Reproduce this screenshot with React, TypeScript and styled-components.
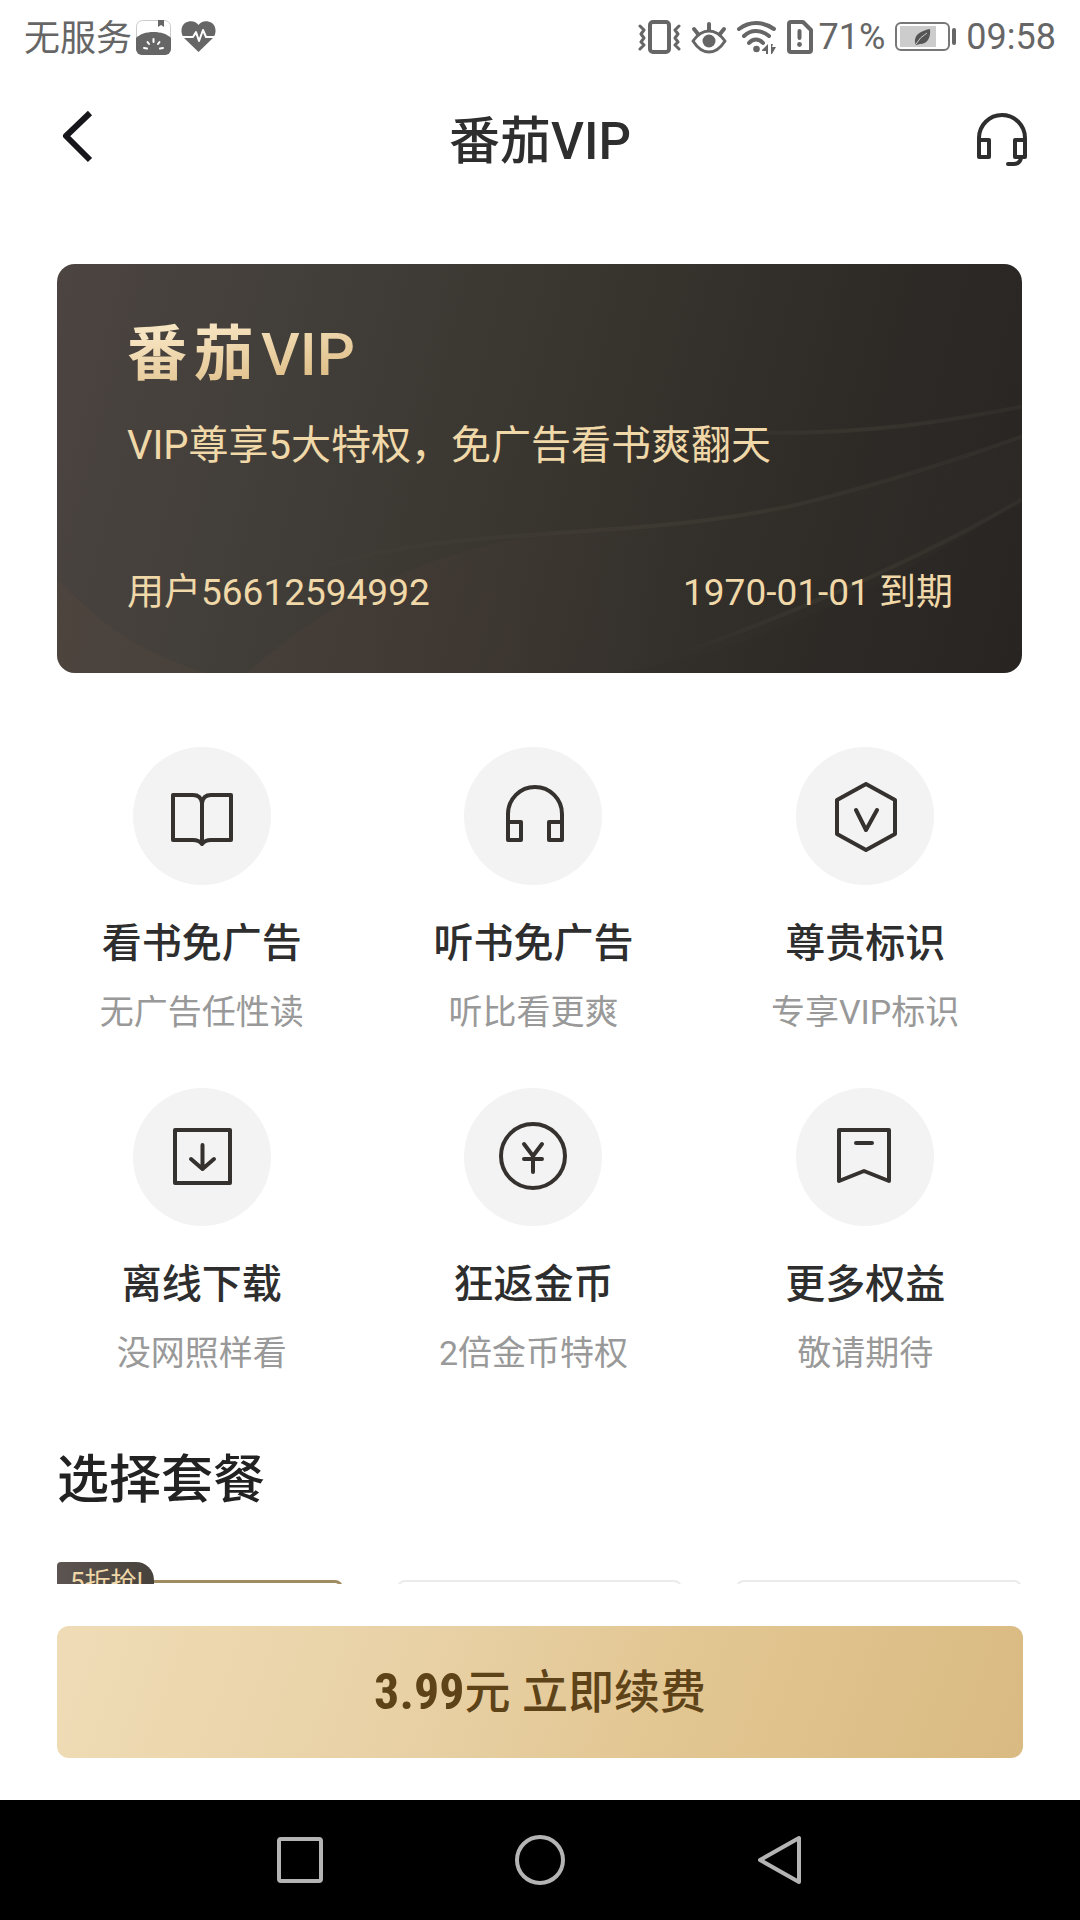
import React from "react";
import styled, { createGlobalStyle } from "styled-components";

const GlobalStyle = createGlobalStyle`
  *, *::before, *::after { box-sizing: border-box; }
  body {
    margin: 0;
    background: #fff;
    color: #2e2e2e;
    font-family: Roboto, "Noto Sans CJK SC", sans-serif;
  }
  h1, h2, h3, p { margin: 0; }
  button { border: 0; padding: 0; background: none; font: inherit; color: inherit; cursor: pointer; }
  svg { display: block; flex: none; }
`;

const Screen = styled.div`
  display: flex;
  flex-direction: column;
  height: 100vh;
  background: #fff;
`;

const StatusBar = styled.div`
  display: flex;
  justify-content: space-between;
  align-items: center;
  height: 74px;
  padding: 0 24px;
  color: #666;
  font-size: 36px;
  line-height: 48px;
`;

const StatusGroup = styled.div<{ $gap: number }>`
  display: flex;
  align-items: center;
  gap: ${(p) => p.$gap}px;
`;

const Carrier = styled.span`
  padding-top: 4px;
`;

const Header = styled.header`
  display: grid;
  grid-template-columns: 1fr auto 1fr;
  align-items: center;
  height: 132px;
  padding: 0 52px;
`;

const HeaderButton = styled.button<{ $end?: boolean }>`
  justify-self: ${(p) => (p.$end ? "end" : "start")};
`;

const PageTitle = styled.h1`
  padding-top: 4px;
  font-size: 51px;
  line-height: 72px;
  font-weight: 500;
`;

const Content = styled.main`
  flex: 1 1 0;
  min-height: 0;
  overflow-y: auto;
  scrollbar-width: none;
  padding-top: 58px;
`;

const VipCard = styled.section`
  position: relative;
  margin: 0 58px 0 57px;
  padding: 55px 69px 56px 70px;
  border-radius: 18px;
  overflow: hidden;
  color: #f0d8a8;
  background: linear-gradient(105deg, #4c4441 0%, #413e39 26%, #38352f 52%, #2e2b27 78%, #282422 100%);
`;

const CardWaves = styled.svg`
  position: absolute;
  inset: 0;
  width: 100%;
  height: 100%;
`;

const CardBody = styled.div`
  position: relative;
`;

const CardTitle = styled.h2`
  width: max-content;
  font-size: 60px;
  line-height: 72px;
  font-weight: 700;
  letter-spacing: 7px;
  color: transparent;
  background: linear-gradient(170deg, #f6e3c0 20%, #dcba80 90%);
  background-clip: text;
`;

const CardTitleMark = styled.span`
  font-weight: 500;
  letter-spacing: 0;
`;

const CardText = styled.p`
  margin-top: 27px;
  font-size: 40px;
  line-height: 56px;
`;

const CardFooter = styled.div`
  display: flex;
  justify-content: space-between;
  margin-top: 95px;
  font-size: 37px;
  line-height: 48px;
`;

const FeatureGrid = styled.ul`
  display: grid;
  grid-template-columns: repeat(3, 1fr);
  row-gap: 52px;
  margin: 74px 0 0;
  padding: 0 49px 0 36px;
  list-style: none;
`;

const Feature = styled.li`
  display: flex;
  flex-direction: column;
  align-items: center;
`;

const FeatureIcon = styled.div`
  display: flex;
  align-items: center;
  justify-content: center;
  width: 138px;
  height: 138px;
  border-radius: 50%;
  background: #f3f3f3;
  color: #35312e;
`;

const FeatureName = styled.h3`
  margin-top: 31px;
  font-size: 40px;
  line-height: 56px;
  font-weight: 500;
`;

const FeatureNote = styled.p`
  margin-top: 16px;
  font-size: 34px;
  line-height: 48px;
  color: #999;
`;

const SectionTitle = styled.h2`
  margin: 68px 57px 0;
  font-size: 52px;
  line-height: 72px;
  font-weight: 500;
  color: #222;
`;

const PlanList = styled.div`
  display: grid;
  grid-template-columns: repeat(3, 1fr);
  column-gap: 54px;
  margin: 63px 58px 0 57px;
  padding-bottom: 48px;
`;

const Plan = styled.div<{ $selected?: boolean }>`
  position: relative;
  min-height: 240px;
  border: ${(p) => (p.$selected ? "3px solid #a08c60" : "2px solid #ebebeb")};
  border-radius: 8px;
`;

const PlanBadge = styled.span`
  position: absolute;
  left: -3px;
  top: -21px;
  padding: 0 11px 0 13px;
  border-radius: 4px 18px 18px 0;
  background: linear-gradient(90deg, #5c5450, #47423c);
  color: #f0d8a8;
  font-size: 26px;
  line-height: 40px;
  white-space: nowrap;
`;

const ActionBar = styled.footer`
  padding: 42px 57px;
  background: #fff;
`;

const RenewButton = styled.button`
  display: flex;
  align-items: center;
  justify-content: center;
  width: 100%;
  height: 132px;
  border-radius: 12px;
  background: linear-gradient(110deg, #efdcb6 0%, #e8d0a4 40%, #e2c691 65%, #d9ba82 100%);
  color: #5e4318;
  font-size: 46px;
  line-height: 64px;
  font-weight: 500;
  white-space: pre;
`;

const Price = styled.span`
  font-family: "Roboto Condensed", Roboto, sans-serif;
  font-size: 50px;
  font-weight: 700;
`;

const NavBar = styled.nav`
  display: flex;
  align-items: center;
  justify-content: center;
  gap: 120px;
  height: 120px;
  background: #000;
  color: #b4b4b4;
`;

const NavButton = styled.button`
  display: flex;
  justify-content: center;
  width: 120px;
`;

const line = {
  fill: "none",
  stroke: "currentColor",
  strokeLinecap: "round" as const,
  strokeLinejoin: "round" as const,
};

const TomatoIcon = () => (
  <svg width="35" height="35" viewBox="0 0 35 35">
    <rect x="0.5" y="0.5" width="34" height="34" rx="6" fill="#fff" stroke="#ccc" />
    <path d="M0 18C4 14 10 12 17.500 12S31 14 35 18V29a6 6 0 0 1-6 6H6a6 6 0 0 1-6-6Z" fill="#666" />
    <path d="M22 0h6v7l-3-2-3 2Z" fill="#666" />
    <g stroke="#fff" strokeWidth="2" strokeLinecap="round">
      <path d="M17.500 19v3M11.500 22l1.500 2M23.500 22l-1.500 2M8 28l3 .5M27 28l-3 .5" />
    </g>
  </svg>
);

const HeartIcon = () => (
  <svg width="35" height="32" viewBox="0 0 35 32">
    <path d="M17.500 31L3 17C-1 12 0 5 4 2C9-1 15 0 17.500 4C20 0 26-1 31 2C35 5 36 12 32 17Z" fill="#666" />
    <path d="M0 16H12l3-5 3 9 4-11 3 7h10" fill="none" stroke="#fff" strokeWidth="2" strokeLinejoin="round" />
  </svg>
);

const VibrateIcon = () => (
  <svg width="43" height="34" viewBox="0 0 43 34" {...line} strokeWidth="3">
    <rect x="12" y="2" width="19" height="30" rx="3" strokeWidth="4" />
    <path d="M2 6l4 4-3 4 3 4-3 4 3 3-4 4M41 6l-4 4 3 4-3 4 3 4-3 3 4 4" />
  </svg>
);

const EyeIcon = () => (
  <svg width="36" height="34" viewBox="0 0 36 34" {...line} strokeWidth="4">
    <path d="M2 21Q9 11 18 11T34 21Q27 32 18 32T2 21Z" strokeWidth="3" />
    <circle cx="18" cy="21" r="6.500" fill="currentColor" stroke="none" />
    <path d="M18 4v6M3 9l4 5M33 9l-4 5" />
  </svg>
);

const WifiIcon = () => (
  <svg width="40" height="34" viewBox="0 0 40 34" {...line} strokeWidth="4">
    <path d="M2 9Q10 3 19 3T37 9M7 16Q12 11 19 11T32 16M12 23q3-3.500 7-3.500t7 3.500" />
    <circle cx="19.500" cy="29" r="3.300" fill="currentColor" stroke="none" />
    <path d="M31 24v10h-2v-3h-4v-1zM34 34V24h2l-1 3h4l-4 7z" fill="currentColor" stroke="none" />
  </svg>
);

const SimIcon = () => (
  <svg width="26" height="34" viewBox="0 0 26 34" {...line} strokeWidth="4">
    <path d="M4 2H16L24 10V30a2 2 0 0 1-2 2H4a2 2 0 0 1-2-2V4a2 2 0 0 1 2-2Z" />
    <path d="M12.500 11v7" />
    <circle cx="12.500" cy="24.500" r="2.400" fill="currentColor" stroke="none" />
  </svg>
);

const BatteryIcon = () => (
  <svg width="61" height="30" viewBox="0 0 61 30">
    <rect x="1" y="1" width="53" height="27" rx="5" fill="none" stroke="#777" strokeWidth="2" />
    <rect x="5" y="4" width="36" height="21" fill="#ccc" />
    <path d="M35 7c1 9-3 15-10 15l-4 1-1-2c-1-8 5-12 15-14Z" fill="#555" />
    <path d="M21 22Q25 15 32 11" fill="none" stroke="#ccc" />
    <rect x="57" y="6" width="4" height="17" rx="2" fill="#666" />
  </svg>
);

const BackIcon = () => (
  <svg width="52" height="60" viewBox="0 0 52 60" {...line} strokeWidth="6">
    <path d="M38 3L14 26L38 50" stroke="#17171b" strokeLinecap="butt" />
  </svg>
);

const SupportIcon = () => (
  <svg width="52" height="54" viewBox="0 0 52 54" {...line} strokeWidth="4">
    <path d="M3 27V25a23 23 0 0 1 46 0V27M3 27H13V44H3ZM39 27H49V44H39ZM45 45q-1 6-7 6h-6" />
  </svg>
);

const featureIcon = (content: React.ReactNode) => (
  <svg width="72" height="72" viewBox="0 0 72 72" {...line} strokeWidth="4">
    {content}
  </svg>
);

const FEATURES = [
  {
    name: "看书免广告",
    note: "无广告任性读",
    icon: featureIcon(
      <path d="M7 15H27q8 0 9 8q1-8 9-8H65V60H45q-6 0-9 4q-3-4-9-4H7ZM36 23V64" />
    ),
  },
  {
    name: "听书免广告",
    note: "听比看更爽",
    icon: featureIcon(
      <path d="M11 42V34a27 27 0 0 1 54 0V42M11 42H24V60H11ZM52 42H65V60H52Z" />
    ),
  },
  {
    name: "尊贵标识",
    note: "专享VIP标识",
    icon: featureIcon(<path d="M37 4L66 20V54L37 70L8 54V20ZM27 30L37 50L48 30" />),
  },
  {
    name: "离线下载",
    note: "没网照样看",
    icon: featureIcon(<path d="M9 9H64V62H9ZM36.500 24V48M25 38L36.500 48L48 38" />),
  },
  {
    name: "狂返金币",
    note: "2倍金币特权",
    icon: featureIcon(
      <>
        <circle cx="36" cy="35" r="32" />
        <path d="M27 23L36 35L45 23M36 35V51M27 38H45" />
      </>
    ),
  },
  {
    name: "更多权益",
    note: "敬请期待",
    icon: featureIcon(<path d="M10 9H60V60L35 50L10 60ZM27 22H43" />),
  },
];

export default function App() {
  return (
    <Screen>
      <GlobalStyle />
      <StatusBar>
        <StatusGroup $gap={10}>
          <StatusGroup $gap={4}>
            <Carrier>无服务</Carrier>
            <TomatoIcon />
          </StatusGroup>
          <HeartIcon />
        </StatusGroup>
        <StatusGroup $gap={6}>
          <StatusGroup $gap={10}>
            <VibrateIcon />
            <EyeIcon />
            <WifiIcon />
            <SimIcon />
          </StatusGroup>
          <StatusGroup $gap={10}>
            <span>71%</span>
            <BatteryIcon />
            <span>09:58</span>
          </StatusGroup>
        </StatusGroup>
      </StatusBar>

      <Header>
        <HeaderButton aria-label="返回">
          <BackIcon />
        </HeaderButton>
        <PageTitle>番茄VIP</PageTitle>
        <HeaderButton $end aria-label="客服">
          <SupportIcon />
        </HeaderButton>
      </Header>

      <Content>
        <VipCard>
          <CardWaves viewBox="0 0 965 408" preserveAspectRatio="none" fill="none" aria-hidden="true">
            <defs>
              <linearGradient id="swell" x1="0" x2="1">
                <stop offset="0" stopColor="#5a443e" stopOpacity="0.200" />
                <stop offset="0.350" stopColor="#4c3a36" stopOpacity="0.220" />
                <stop offset="0.550" stopColor="#3c3630" stopOpacity="0.100" />
                <stop offset="1" stopColor="#3c3830" stopOpacity="0.150" />
              </linearGradient>
              <linearGradient id="ridge" x1="0" x2="1">
                <stop offset="0" stopColor="#524a40" stopOpacity="0" />
                <stop offset="0.500" stopColor="#4a473c" stopOpacity="0.350" />
                <stop offset="1" stopColor="#45423a" stopOpacity="0.250" />
              </linearGradient>
            </defs>
            <path d="M190 408C300 310 420 270 560 262C720 252 860 215 965 170V235C850 310 720 380 560 408Z" fill="url(#swell)" />
            <path d="M0 315C50 365 90 390 150 408H0Z" fill="#5a4c40" fillOpacity="0.250" />
            <path d="M240 310C400 255 560 280 740 240C830 218 900 195 965 172" stroke="url(#ridge)" strokeWidth="4" />
            <path d="M640 165C760 175 870 162 965 142" stroke="url(#ridge)" strokeWidth="4" />
            <path d="M620 390C760 340 870 290 965 235" stroke="url(#ridge)" strokeWidth="4" />
          </CardWaves>
          <CardBody>
            <CardTitle>
              番茄<CardTitleMark>VIP</CardTitleMark>
            </CardTitle>
            <CardText>VIP尊享5大特权，免广告看书爽翻天</CardText>
            <CardFooter>
              <span>用户56612594992</span>
              <span>1970-01-01 到期</span>
            </CardFooter>
          </CardBody>
        </VipCard>

        <FeatureGrid>
          {FEATURES.map((feature) => (
            <Feature key={feature.name}>
              <FeatureIcon>{feature.icon}</FeatureIcon>
              <FeatureName>{feature.name}</FeatureName>
              <FeatureNote>{feature.note}</FeatureNote>
            </Feature>
          ))}
        </FeatureGrid>

        <SectionTitle>选择套餐</SectionTitle>
        <PlanList>
          <Plan $selected>
            <PlanBadge>5折抢!</PlanBadge>
          </Plan>
          <Plan />
          <Plan />
        </PlanList>
      </Content>

      <ActionBar>
        <RenewButton>
          <Price>3.99</Price>元 立即续费
        </RenewButton>
      </ActionBar>

      <NavBar>
        <NavButton aria-label="最近任务">
          <svg width="50" height="50" viewBox="0 0 50 50" {...line} strokeWidth="4">
            <rect x="4" y="4" width="42" height="42" rx="2" />
          </svg>
        </NavButton>
        <NavButton aria-label="主屏幕">
          <svg width="50" height="50" viewBox="0 0 50 50" {...line} strokeWidth="4">
            <circle cx="25" cy="25" r="23" />
          </svg>
        </NavButton>
        <NavButton aria-label="后退">
          <svg width="50" height="50" viewBox="0 0 50 50" {...line} strokeWidth="4">
            <path d="M44 3V47L5 25Z" />
          </svg>
        </NavButton>
      </NavBar>
    </Screen>
  );
}
